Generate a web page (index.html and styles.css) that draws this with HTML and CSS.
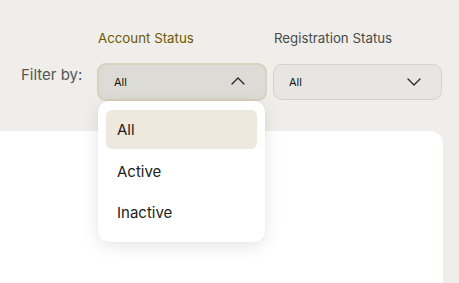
FILE: index.html
```html
<!DOCTYPE html>
<html>
<head>
<meta charset="utf-8">
<link rel="stylesheet" href="styles.css">
</head>
<body>
<div class="toolbar">
  <div class="filter-label">Filter by:</div>
  <div class="field field-account">
    <div class="field-label active">Account Status</div>
    <div class="select open">
      <span>All</span>
      <svg width="14" height="8" viewBox="0 0 14 8"><path d="M1 7 L7 1 L13 7" fill="none" stroke="#2a2a2a" stroke-width="1.4" stroke-linecap="round" stroke-linejoin="round"/></svg>
    </div>
    <div class="menu">
      <div class="menu-item selected">All</div>
      <div class="menu-item">Active</div>
      <div class="menu-item">Inactive</div>
    </div>
  </div>
  <div class="field">
    <div class="field-label">Registration Status</div>
    <div class="select">
      <span>All</span>
      <svg width="14" height="8" viewBox="0 0 14 8"><path d="M1 1 L7 7 L13 1" fill="none" stroke="#2a2a2a" stroke-width="1.4" stroke-linecap="round" stroke-linejoin="round"/></svg>
    </div>
  </div>
</div>
<div class="card"></div>
</body>
</html>
```

FILE: styles.css
```css
html, body {
  margin: 0;
  padding: 0;
  height: 100%;
  overflow: hidden;
}
body {
  background: #efeeea;
  font-family: Inter, "Noto Sans", sans-serif;
  display: flex;
  flex-direction: column;
}
.toolbar {
  display: flex;
  align-items: flex-start;
  padding: 30px 0 0 21px;
  height: 101px;
  box-sizing: border-box;
  position: relative;
  z-index: 2;
  flex: none;
}
.filter-label {
  font-size: 15px;
  color: #555;
  margin-top: 35px;
  width: 76px;
}
.field {
  display: flex;
  flex-direction: column;
  width: 169px;
  margin-right: 7px;
  position: relative;
}
.field-label {
  font-size: 13.3px;
  line-height: 16px;
  color: #4a4a4a;
  padding-left: 1px;
  height: 34px;
}
.field-label.active {
  color: #6e5800;
}
.select {
  height: 36px;
  box-sizing: border-box;
  border: 1px solid #d4d2cd;
  border-radius: 9px;
  background: #e8e6e2;
  display: flex;
  align-items: center;
  justify-content: space-between;
  padding: 0 20px 0 15px;
  font-size: 11px;
  color: #111;
}
.select.open {
  background: #dddbd6;
  border: 2px solid #d8d1bd;
  height: 38px;
  margin-top: -1px;
  width: 170px;
  padding: 0 20px 0 15px;
}
.select.open svg {
  margin-top: -2px;
}
.menu {
  position: absolute;
  top: 71px;
  left: 1px;
  width: 167px;
  height: 141px;
  box-sizing: border-box;
  background: #fff;
  border-radius: 10px;
  box-shadow: 0 4px 18px rgba(0, 0, 0, 0.10), 0 0 1px rgba(0, 0, 0, 0.12);
  padding: 9px 8px;
  display: flex;
  flex-direction: column;
  gap: 1px;
}
.menu-item {
  height: 40px;
  display: flex;
  align-items: center;
  padding-left: 11px;
  font-size: 15px;
  color: #222;
  border-radius: 6px;
}
.menu-item.selected {
  background: #ede9df;
  height: 39px;
  margin-bottom: 1px;
}
.card {
  margin-top: 30px;
  width: 443px;
  flex: 1;
  background: #fff;
  border-top-right-radius: 13px;
}
```
